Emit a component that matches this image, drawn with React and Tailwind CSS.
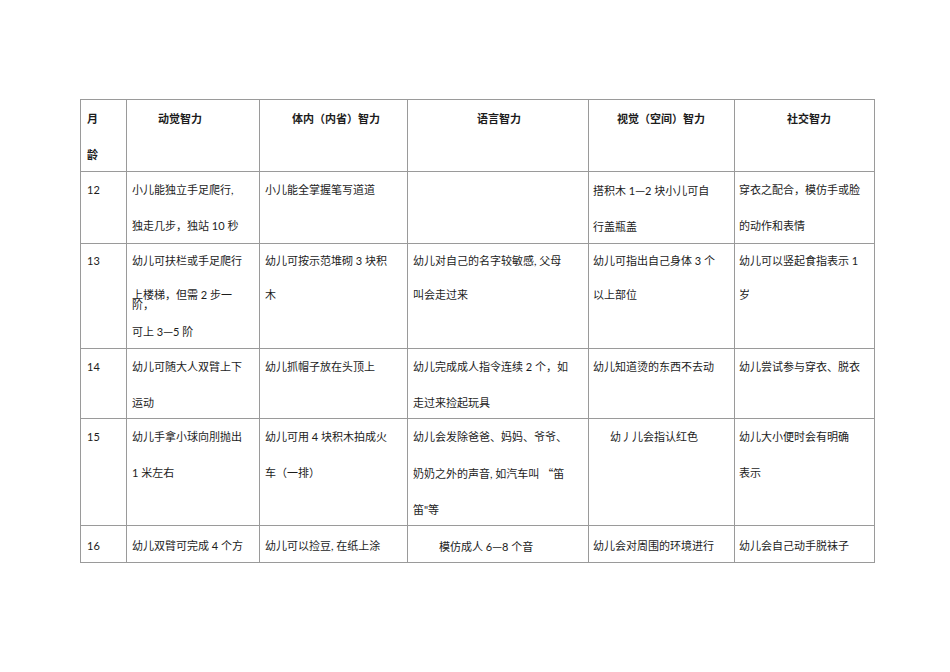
import React from "react";

const cell = "border-r border-b border-[#9a9a9a] whitespace-nowrap";

function D() {
  return <span className="font-['Noto_Sans_CJK_SC',sans-serif]">—</span>;
}

export default function App() {
  return (
    <div className="w-[950px] h-[672px] bg-white pt-[99px] pl-[80px] font-[Lato,'Noto_Sans_CJK_SC',sans-serif] text-[11px] text-[#1c1c1c]">
      <div className="grid w-[795px] grid-cols-[46px_133px_148px_181px_146px_140px] grid-rows-[72px_72px_105px_70px_107px_37px] border-l border-t border-[#9a9a9a]">
        {/* header */}
        <div className={`${cell} pt-[1px] pl-[6px] leading-[36px] font-bold`}>
          <div>月</div>
          <div>龄</div>
        </div>
        <div className={`${cell} pt-[1px] pl-[31px] leading-[36px] font-bold`}>动觉智力</div>
        <div className={`${cell} pt-[1px] pl-[32px] leading-[36px] font-bold`}>体内（内省）智力</div>
        <div className={`${cell} pt-[1px] pl-[69px] leading-[36px] font-bold`}>语言智力</div>
        <div className={`${cell} pt-[1px] pl-[28px] leading-[36px] font-bold`}>视觉（空间）智力</div>
        <div className={`${cell} pt-[1px] pl-[52px] leading-[36px] font-bold`}>社交智力</div>

        {/* 12 */}
        <div className={`${cell} pl-[6px] leading-[36px]`}>12</div>
        <div className={`${cell} pl-[5px] leading-[36px]`}>
          <div>小儿能独立手足爬行,</div>
          <div>独走几步，独站 10 秒</div>
        </div>
        <div className={`${cell} pl-[5px] leading-[36px]`}>小儿能全掌握笔写道道</div>
        <div className={`${cell} pl-[5px] leading-[36px]`}></div>
        <div className={`${cell} pl-[4px] leading-[36px]`}>
          <div>搭积木 1<D />2 块小儿可自</div>
          <div>行盖瓶盖</div>
        </div>
        <div className={`${cell} pl-[4px] leading-[36px]`}>
          <div>穿衣之配合，模仿手或脸</div>
          <div>的动作和表情</div>
        </div>

        {/* 13 */}
        <div className={`${cell} pl-[6px] leading-[34px]`}>13</div>
        <div className={`${cell} pl-[5px]`}>
          <div className="leading-[34px]">幼儿可扶栏或手足爬行</div>
          <div className="pt-[12px] leading-[10px]">
            <div>上楼梯，但需 2 步一</div>
            <div>阶，</div>
          </div>
          <div className="mt-[4px] leading-[34px]">可上 3<D />5 阶</div>
        </div>
        <div className={`${cell} pl-[5px] leading-[34px]`}>
          <div>幼儿可按示范堆砌 3 块积</div>
          <div>木</div>
        </div>
        <div className={`${cell} pl-[5px] leading-[34px]`}>
          <div>幼儿对自己的名字较敏感, 父母</div>
          <div>叫会走过来</div>
        </div>
        <div className={`${cell} pl-[4px] leading-[34px]`}>
          <div>幼儿可指出自己身体 3 个</div>
          <div>以上部位</div>
        </div>
        <div className={`${cell} pl-[4px] leading-[34px]`}>
          <div>幼儿可以竖起食指表示 1</div>
          <div>岁</div>
        </div>

        {/* 14 */}
        <div className={`${cell} pl-[6px] leading-[36px]`}>14</div>
        <div className={`${cell} pl-[5px] leading-[36px]`}>
          <div>幼儿可随大人双臂上下</div>
          <div>运动</div>
        </div>
        <div className={`${cell} pl-[5px] leading-[36px]`}>幼儿抓帽子放在头顶上</div>
        <div className={`${cell} pl-[5px] leading-[36px]`}>
          <div>幼儿完成成人指令连续 2 个，如</div>
          <div>走过来捡起玩具</div>
        </div>
        <div className={`${cell} pl-[4px] leading-[36px]`}>幼儿知道烫的东西不去动</div>
        <div className={`${cell} pl-[4px] leading-[36px]`}>幼儿尝试参与穿衣、脱衣</div>

        {/* 15 */}
        <div className={`${cell} pl-[6px] leading-[36px]`}>15</div>
        <div className={`${cell} pl-[5px] leading-[36px]`}>
          <div>幼儿手拿小球向刖抛出</div>
          <div>1 米左右</div>
        </div>
        <div className={`${cell} pl-[5px] leading-[36px]`}>
          <div>幼儿可用 4 块积木拍成火</div>
          <div>车（一排）</div>
        </div>
        <div className={`${cell} pl-[5px] leading-[36px]`}>
          <div>幼儿会发除爸爸、妈妈、爷爷、</div>
          <div>
            奶奶之外的声音, 如汽车叫 <span className="font-['Noto_Sans_CJK_SC',sans-serif]">“</span>笛
          </div>
          <div>笛"等</div>
        </div>
        <div className={`${cell} pl-[21px] leading-[36px]`}>幼丿儿会指认红色</div>
        <div className={`${cell} pl-[4px] leading-[36px]`}>
          <div>幼儿大小便时会有明确</div>
          <div>表示</div>
        </div>

        {/* 16 */}
        <div className={`${cell} pt-[2px] pl-[6px] leading-[36px]`}>16</div>
        <div className={`${cell} pt-[2px] pl-[5px] leading-[36px]`}>幼儿双臂可完成 4 个方</div>
        <div className={`${cell} pt-[2px] pl-[5px] leading-[36px]`}>幼儿可以捡豆, 在纸上涂</div>
        <div className={`${cell} pt-[2px] pl-[31px] leading-[36px]`}>模仿成人 6<D />8 个音</div>
        <div className={`${cell} pt-[2px] pl-[4px] leading-[36px]`}>幼儿会对周围的环境进行</div>
        <div className={`${cell} pt-[2px] pl-[4px] leading-[36px]`}>幼儿会自己动手脱袜子</div>
      </div>
    </div>
  );
}
